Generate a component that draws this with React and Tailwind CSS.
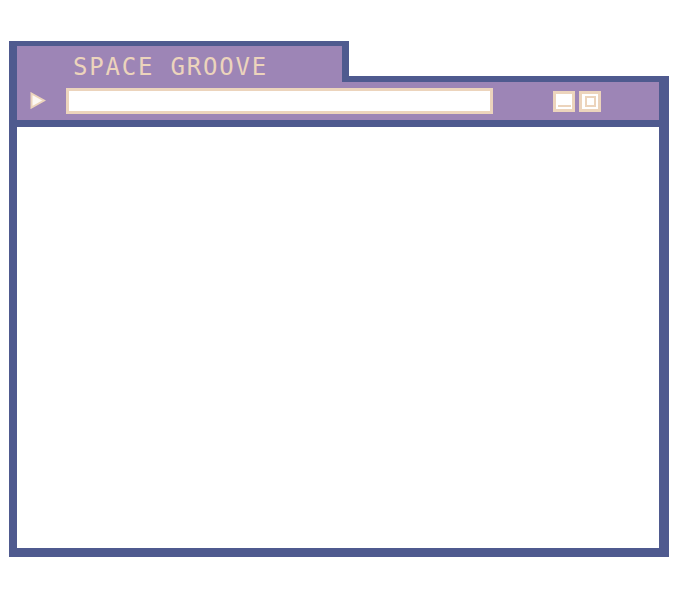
export default function App() {
  return (
    <div className="w-[700px] h-[614px] bg-white pt-[41px] pl-[9px]">
      <div className="flex flex-col w-[660px]">
        {/* tab + step */}
        <div className="flex h-[41px]">
          <div className="w-[340px] h-full bg-[#9d85b6] border-t-[5px] border-l-8 border-r-[7px] border-[#4f5a8f] pl-[56px] pt-[9px]">
            <span
              className="block text-[24px] leading-[24px] tracking-[1.8px] text-[#ecd4bc]"
              style={{ fontFamily: '"DejaVu Sans Mono", monospace' }}
            >
              SPACE GROOVE
            </span>
          </div>
          <div className="flex-1 self-end h-[6px] bg-[#4f5a8f]" />
        </div>

        {/* window body */}
        <div className="flex flex-col border-l-8 border-r-10 border-b-[9px] border-[#4f5a8f]">
          <div className="h-[38px] bg-[#9d85b6] flex items-start">
            <svg width="16" height="17" viewBox="0 0 16 17" className="ml-[13px] mt-[10px]">
              <polygon points="1.5,1.5 14,8.5 1.5,15.5" fill="#fdf8f3" stroke="#ecd4bc" strokeWidth="2" />
            </svg>
            <div className="ml-[20px] mt-[6px] w-[427px] h-[26px] border-[3px] border-[#ecd4bc] bg-white" />
            <div className="ml-[60px] mt-[9px] flex gap-[4px]">
              <div className="w-[22px] h-[21px] border-[3px] border-[#ecd4bc] bg-white flex items-end justify-center pb-[2px]">
                <div className="w-[13px] h-[2px] bg-[#ecd4bc]" />
              </div>
              <div className="w-[22px] h-[21px] border-[3px] border-[#ecd4bc] bg-white flex items-center justify-center">
                <div className="w-[11px] h-[11px] border-2 border-[#ecd4bc]" />
              </div>
            </div>
          </div>
          <div className="h-[7px] bg-[#4f5a8f]" />
          <div className="h-[421px] bg-white" />
        </div>
      </div>
    </div>
  )
}
